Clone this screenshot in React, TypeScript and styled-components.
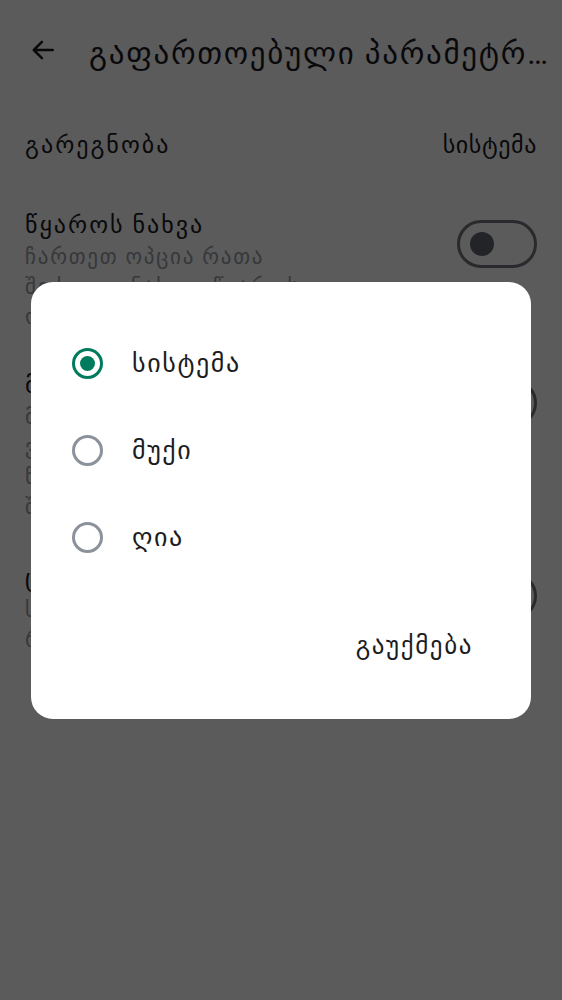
import React, { useState } from 'react';
import styled, { createGlobalStyle } from 'styled-components';

const GlobalStyle = createGlobalStyle`
  html, body {
    margin: 0;
    padding: 0;
  }
  body {
    font-family: Roboto, "DejaVu Sans", "Noto Sans", sans-serif;
    background: #ffffff;
  }
`;

const Page = styled.div`
  min-height: 1000px;
  background: #fefeff;
  color: #1b1b1f;
`;

const TopBar = styled.div`
  height: 100px;
  display: flex;
  align-items: center;
  padding: 0 12px 0 30px;
  gap: 33px;
`;

const BackButton = styled.div`
  width: 26px;
  height: 26px;
  display: flex;
  align-items: center;
  justify-content: center;
  flex-shrink: 0;
`;

const Title = styled.div`
  font-size: 31px;
  line-height: 40px;
  letter-spacing: 1.7px;
  white-space: nowrap;
  overflow: hidden;
  text-overflow: ellipsis;
  margin-top: 8px;
`;

const Row = styled.div<{ $top?: number }>`
  display: flex;
  justify-content: space-between;
  align-items: flex-start;
  padding: ${(p) => p.$top ?? 24}px 25px 20px 25px;
`;

const TextCol = styled.div`
  display: flex;
  flex-direction: column;
`;

const RowTitle = styled.div`
  font-size: 24px;
  line-height: 34px;
  letter-spacing: 2px;
  white-space: nowrap;
`;

const RowValue = styled.div`
  font-size: 24px;
  line-height: 34px;
  letter-spacing: 0.6px;
  color: #1b1b1f;
`;

const SubLine = styled.div`
  font-size: 21px;
  line-height: 30px;
  letter-spacing: 1.8px;
  color: #989ca3;
  white-space: nowrap;
  &:first-of-type {
    margin-top: 4px;
  }
`;

const Toggle = styled.div<{ $offset: number }>`
  width: 80px;
  height: 48px;
  box-sizing: border-box;
  border: 3px solid #74777f;
  border-radius: 24px;
  display: flex;
  align-items: center;
  padding-left: 10px;
  margin-top: ${(p) => p.$offset}px;
  flex-shrink: 0;
  &::before {
    content: '';
    width: 24px;
    height: 24px;
    border-radius: 50%;
    background: #62666d;
  }
`;

const Scrim = styled.div`
  position: fixed;
  inset: 0;
  background: rgba(0, 0, 0, 0.643);
  display: flex;
  align-items: center;
  justify-content: center;
`;

const Dialog = styled.div`
  width: 500px;
  background: #ffffff;
  border-radius: 22px;
  padding: 38px 0 49px;
  box-sizing: border-box;
  display: flex;
  flex-direction: column;
`;

const Option = styled.div`
  height: 87px;
  display: flex;
  align-items: center;
  padding-left: 41px;
  gap: 29px;
  cursor: pointer;
`;

const Radio = styled.div<{ $checked: boolean }>`
  width: 31px;
  height: 31px;
  box-sizing: border-box;
  border-radius: 50%;
  border: 3px solid ${(p) => (p.$checked ? '#007b5e' : '#8b929b')};
  display: flex;
  align-items: center;
  justify-content: center;
  flex-shrink: 0;
  &::after {
    content: '';
    width: 15px;
    height: 15px;
    border-radius: 50%;
    background: #007b5e;
    display: ${(p) => (p.$checked ? 'block' : 'none')};
  }
`;

const OptionLabel = styled.div`
  font-size: 26px;
  line-height: 34px;
  letter-spacing: 1.6px;
  color: #1c1c1e;
`;

const Actions = styled.div`
  display: flex;
  justify-content: flex-end;
  padding-right: 46px;
  margin-top: 41px;
`;

const TextButton = styled.div`
  height: 48px;
  padding: 0 12px;
  display: flex;
  align-items: center;
  font-size: 25px;
  letter-spacing: 1.6px;
  color: #1c1c1e;
`;

const ArrowBack = () => (
  <svg width="26" height="26" viewBox="0 0 24 24" fill="none">
    <path d="M21 12H3.5M11 4.5L3.5 12l7.5 7.5" stroke="#1b1b1f" strokeWidth="2.3" strokeLinecap="round" strokeLinejoin="round" />
  </svg>
);

const settings = [
  {
    title: 'წყაროს ნახვა',
    lines: ['ჩართეთ ოპცია რათა', 'შეძლოთ ნახოთ წყაროს კოდი', 'ონლაინ რედაქტორში'],
    top: 26,
    offset: 12,
  },
  {
    title: 'მინიატურების ჩვენება',
    lines: ['მოვლენების სიაში', 'ვიდეოების და სურათების', 'წინასწარი ხედის', 'შექმნა ავტომატურად'],
    top: 16,
    offset: 11,
  },
  {
    title: 'ციფრული ხელმოწერა',
    lines: ['სერტიფიკატის შემოწმება', 'რეჟიმი'],
    top: 19,
    offset: 11,
  },
];

const options = ['სისტემა', 'მუქი', 'ღია'];

export default function App() {
  const [selected, setSelected] = useState(0);

  return (
    <Page>
      <GlobalStyle />
      <TopBar>
        <BackButton>
          <ArrowBack />
        </BackButton>
        <Title>გაფართოებული პარამეტრები</Title>
      </TopBar>

      <Row $top={28}>
        <RowTitle>გარეგნობა</RowTitle>
        <RowValue>{options[selected]}</RowValue>
      </Row>

      {settings.map((s) => (
        <Row key={s.title} $top={s.top}>
          <TextCol>
            <RowTitle>{s.title}</RowTitle>
            {s.lines.map((l) => (
              <SubLine key={l}>{l}</SubLine>
            ))}
          </TextCol>
          <Toggle $offset={s.offset} />
        </Row>
      ))}

      <Scrim>
        <Dialog>
          {options.map((o, i) => (
            <Option key={o} onClick={() => setSelected(i)}>
              <Radio $checked={i === selected} />
              <OptionLabel>{o}</OptionLabel>
            </Option>
          ))}
          <Actions>
            <TextButton>გაუქმება</TextButton>
          </Actions>
        </Dialog>
      </Scrim>
    </Page>
  );
}
